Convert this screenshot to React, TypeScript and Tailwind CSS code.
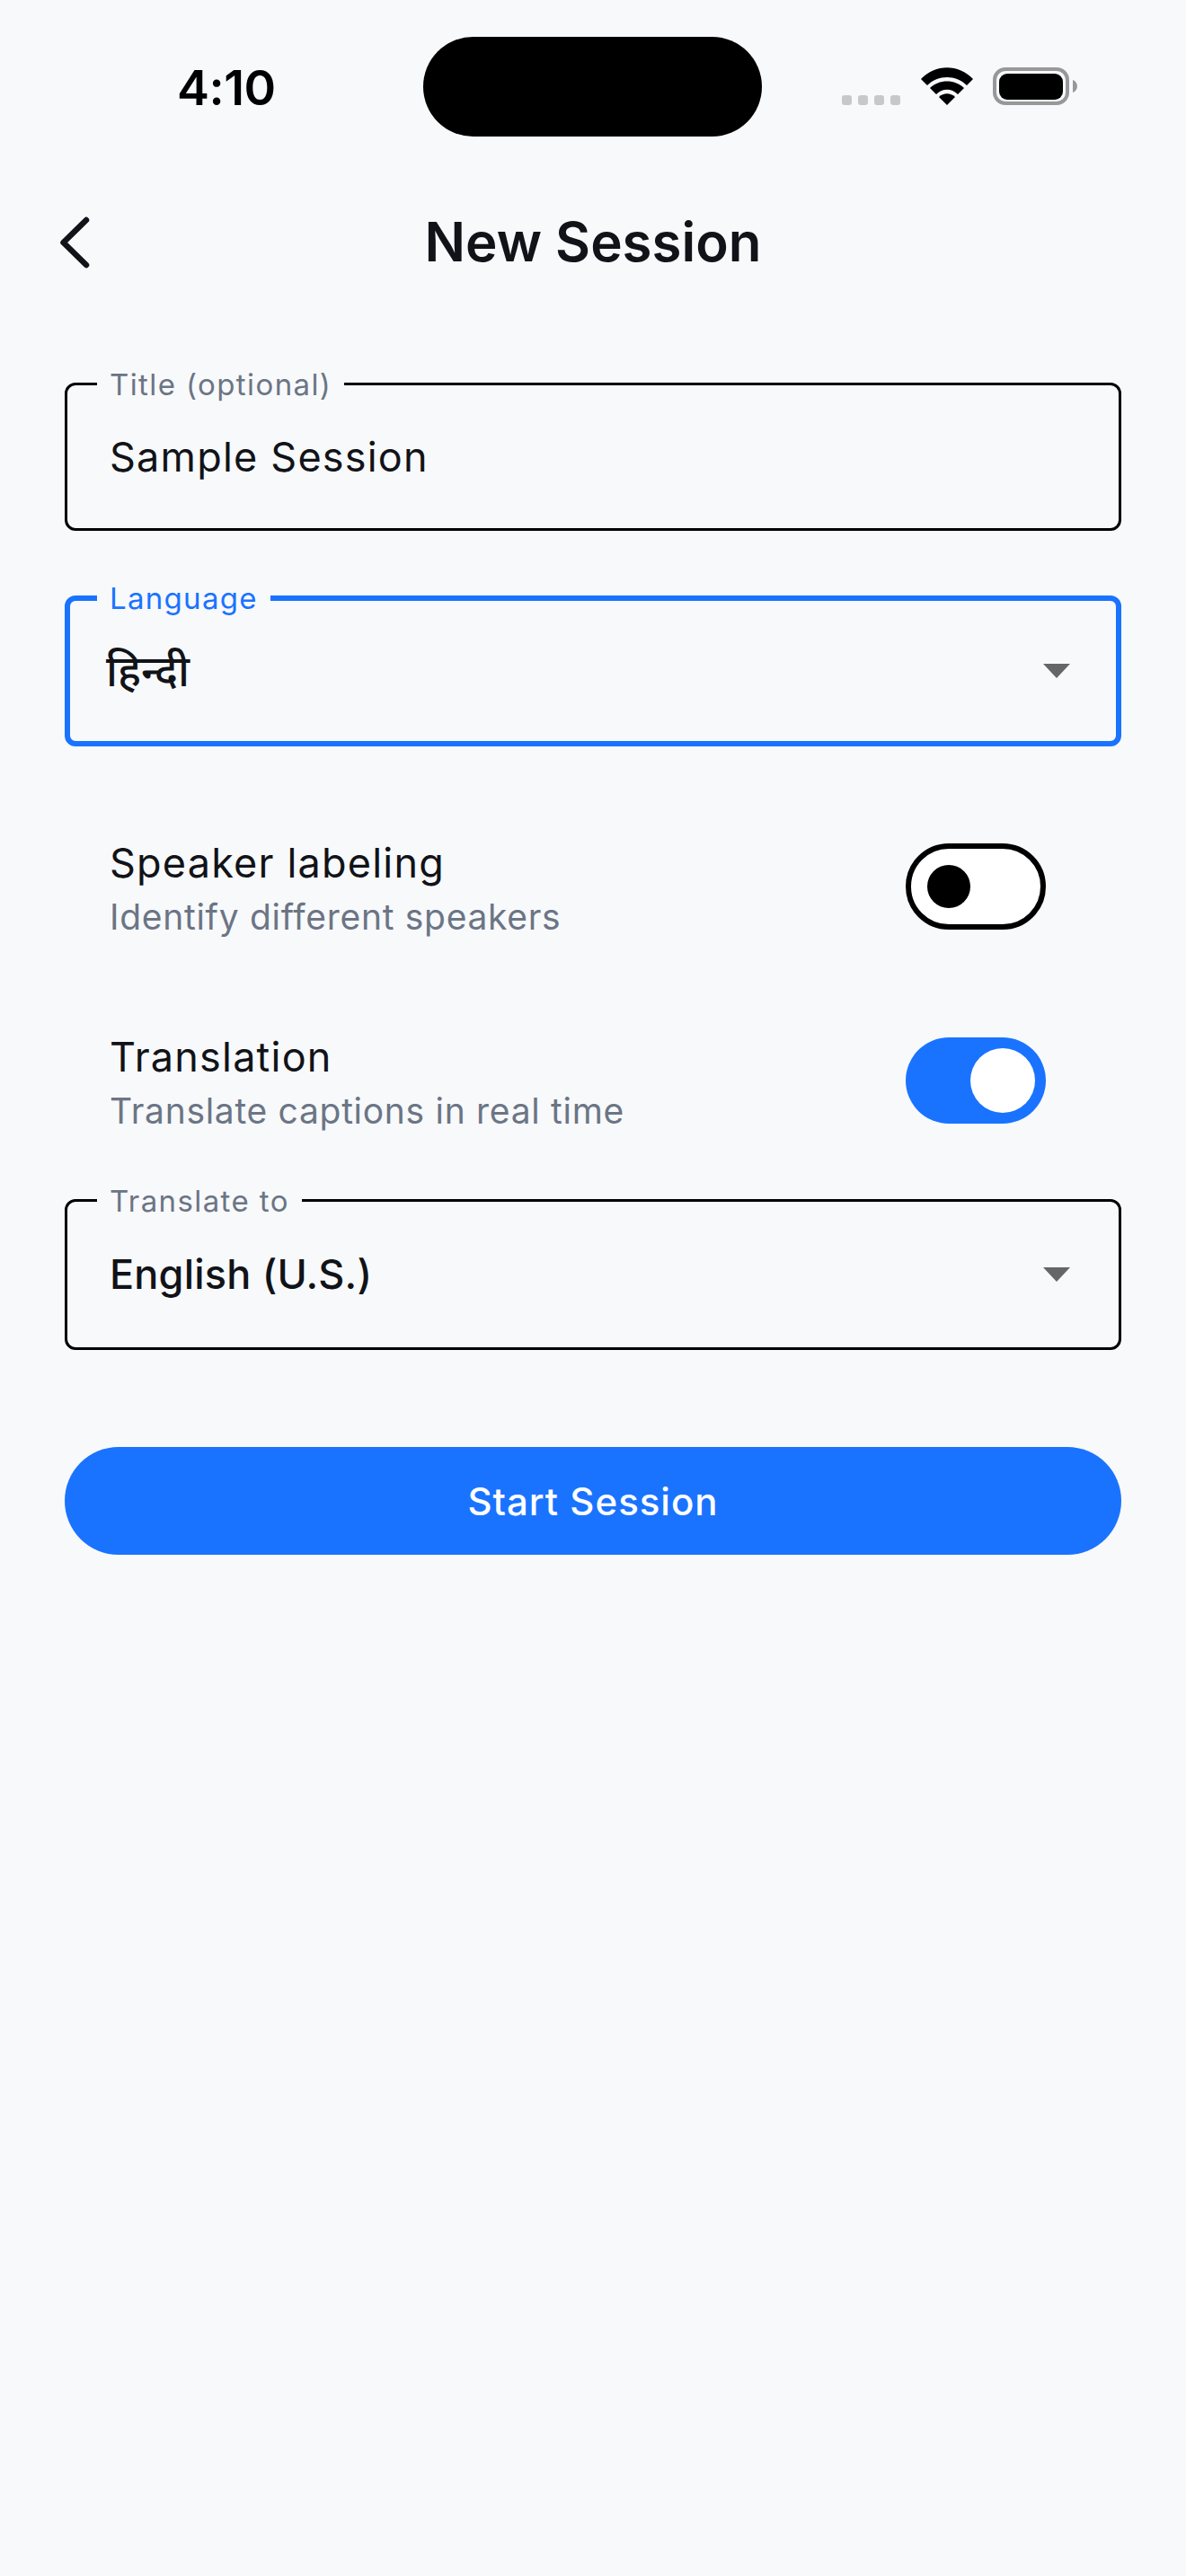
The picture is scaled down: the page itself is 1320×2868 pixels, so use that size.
import React from "react";

const font = { fontFamily: "Inter, 'Noto Sans', sans-serif" };

const Arrow: React.FC<{ className: string }> = ({ className }) => (
  <svg width="30" height="16" viewBox="0 0 30 16" className={"shrink-0 " + className}>
    <path d="M0 0H30L15 16Z" fill="#666666" />
  </svg>
);

const Field: React.FC<{
  label: string;
  active?: boolean;
  className: string;
  children: React.ReactNode;
}> = ({ label, active, className, children }) => (
  <div
    className={
      (active
        ? "relative flex items-center justify-between rounded-[12px] border-[6px] border-[#1a73ff] pl-[44px] "
        : "relative flex items-center justify-between rounded-[12px] border-[3px] border-black pl-[47px] ") + className
    }
  >
    <span
      className={
        active
          ? "absolute left-[30px] top-[-19px] bg-[#f8f9fb] px-[14px] text-[33px] leading-[33px] tracking-[1.3px] text-[#1a73ff]"
          : "absolute left-[33px] top-[-17px] bg-[#f8f9fb] px-[14px] text-[33px] leading-[33px] tracking-[1.4px] text-[#6b7585]"
      }
    >
      {label}
    </span>
    {children}
  </div>
);

const Toggle: React.FC<{ on?: boolean }> = ({ on }) =>
  on ? (
    <div className="flex h-[96px] w-[156px] shrink-0 items-center justify-end rounded-full bg-[#1a73ff] pr-[12px]">
      <div className="h-[72px] w-[72px] rounded-full bg-white" />
    </div>
  ) : (
    <div className="flex h-[96px] w-[156px] shrink-0 items-center rounded-full border-[6px] border-black bg-white pl-[18px]">
      <div className="h-[48px] w-[48px] rounded-full bg-black" />
    </div>
  );

const SwitchRow: React.FC<{ title: string; sub: string; on?: boolean }> = ({ title, sub, on }) => (
  <div className="flex h-[216px] items-center justify-between pl-[122px] pr-[156px]">
    <div className="pt-[7px]">
      <div className="text-[45px] leading-[60px] tracking-[1.2px] text-[#111318]">{title}</div>
      <div className="text-[39px] leading-[60px] tracking-[0.7px] text-[#6b7585]">{sub}</div>
    </div>
    <Toggle on={on} />
  </div>
);

export default function App() {
  return (
    <div className="h-[2868px] w-[1320px] overflow-hidden bg-[#f8f9fb]" style={font}>
      {/* status bar */}
      <div className="relative flex h-[193px] items-start justify-between">
        <div className="ml-[197px] mt-[68px] text-[54px] font-semibold leading-[60px] tracking-[-0.5px] text-black">
          4:10
        </div>
        <div className="absolute left-[471px] top-[41px] h-[111px] w-[377px] rounded-[56px] bg-black" />
        <div className="mr-[130px] mt-[75px] flex items-end">
          <div className="mr-[23px] flex gap-[7px]">
            <div className="h-[11px] w-[11px] rounded-[3px] bg-[#c8c8ca]" />
            <div className="h-[11px] w-[11px] rounded-[3px] bg-[#c8c8ca]" />
            <div className="h-[11px] w-[11px] rounded-[3px] bg-[#c8c8ca]" />
            <div className="h-[11px] w-[11px] rounded-[3px] bg-[#c8c8ca]" />
          </div>
          <svg width="58" height="42" viewBox="0 0 58 42" className="mr-[22px]">
            <path d="M0 13C16-4 42-4 58 13L51 20C39 8 19 8 7 20Z" fill="black" />
            <path d="M10 23C20 13 38 13 48 23L41 30C34 23 24 23 17 30Z" fill="black" />
            <path d="M20 33C25 28 33 28 38 33L29 42Z" fill="black" />
          </svg>
          <div className="relative flex h-[42px] w-[85px] items-center justify-center rounded-[14px] border-[4px] border-[#98989a]">
            <div className="h-[29px] w-[71px] rounded-[9px] bg-black" />
            <svg width="5" height="14" viewBox="0 0 5 14" className="absolute right-[-13px]">
              <path d="M0 0C3 1 5 4 5 7C5 10 3 13 0 14Z" fill="#98989a" />
            </svg>
          </div>
        </div>
      </div>

      {/* header */}
      <div className="relative flex h-[152px] items-start justify-center">
        <svg width="36" height="60" viewBox="0 0 36 60" className="absolute left-[66px] top-[47px]">
          <path
            d="M30 5L4.5 30L30 55"
            fill="none"
            stroke="#111318"
            strokeWidth="6.5"
            strokeLinecap="round"
            strokeLinejoin="round"
          />
        </svg>
        <div className="mt-[40px] text-[60px] font-semibold leading-[72px] text-[#111318]">New Session</div>
      </div>

      {/* form */}
      <div className="mt-[81px] px-[72px]">
        <Field label="Title (optional)" className="h-[165px]">
          <span className="text-[45px] tracking-[1.2px] text-[#111318]">Sample Session</span>
        </Field>
        <Field label="Language" active className="mt-[72px] h-[168px]">
          <span className="-ml-[4px] text-[48px] font-medium text-[#111318]">हिन्दी</span>
          <Arrow className="mr-[51px]" />
        </Field>
        <div className="-mx-[72px] mt-[48px]">
          <SwitchRow title="Speaker labeling" sub="Identify different speakers" />
          <SwitchRow title="Translation" sub="Translate captions in real time" on />
        </div>
        <Field label="Translate to" className="mt-[24px] h-[168px]">
          <span className="text-[45px] font-[550] tracking-[0.2px] text-[#111318]">English (U.S.)</span>
          <Arrow className="mr-[54px]" />
        </Field>
        <div className="mt-[108px] flex h-[120px] items-center justify-center rounded-full bg-[#1a73ff] text-[42px] font-medium tracking-[1px] text-white">
          Start Session
        </div>
      </div>
    </div>
  );
}
